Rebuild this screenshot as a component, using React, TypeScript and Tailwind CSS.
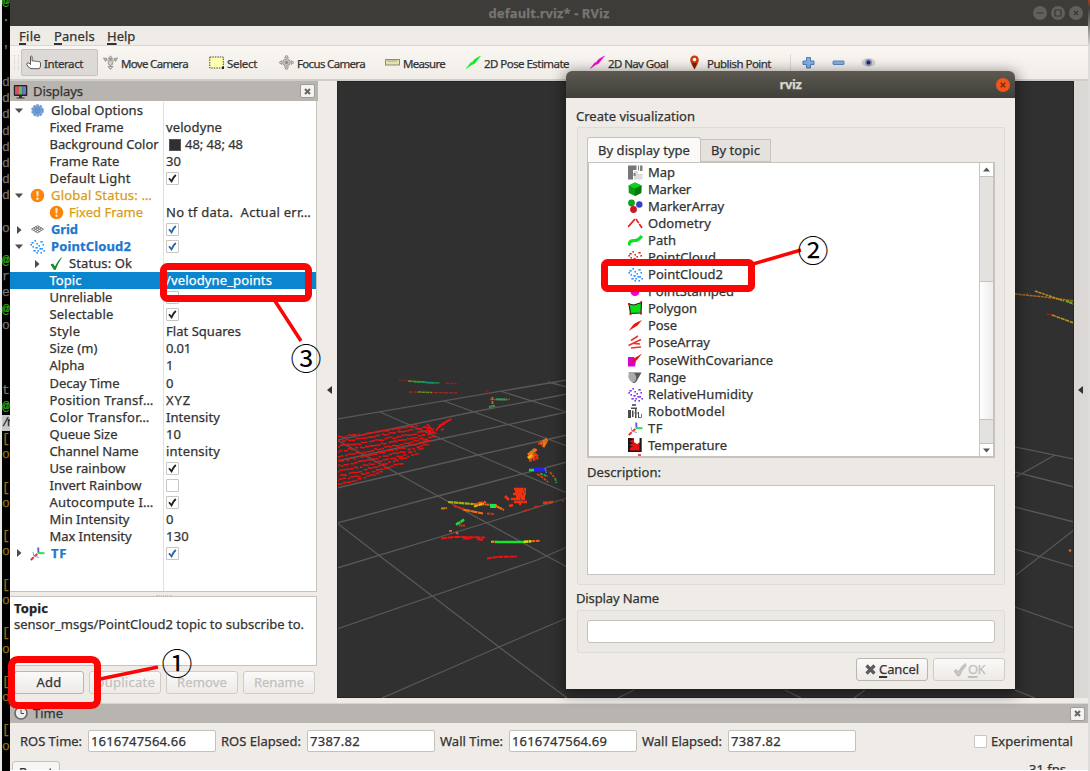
import React, { useLayoutEffect, useRef, useState } from 'react';

/** Text run whose tracking is tuned so that it fills an advance width of `w` pixels. */
function Fit({ w, children, className = '' }: { w: number; children: string; className?: string }) {
  const ref = useRef<HTMLSpanElement>(null);
  const [spacing, setSpacing] = useState(0);
  useLayoutEffect(() => {
    const el = ref.current;
    if (!el) return;
    const natural = el.getBoundingClientRect().width;
    setSpacing((w - natural) / children.length);
  }, [w, children]);
  return (
    <span ref={ref} className={`inline-block shrink-0 whitespace-pre ${className}`} style={{ letterSpacing: spacing }}>
      {children}
    </span>
  );
}

function Mnemonic({ text, className }: { text: string; className: string }) {
  return (
    <span className={className}>
      <span className="underline decoration-[1.5px] underline-offset-[2px]">{text[0]}</span>
      {text.slice(1)}
    </span>
  );
}

const dots = ['2,3', '5,1', '7,4', '11,2', '13,5', '3,7', '6,8', '9,6', '12,9', '4,11', '8,11', '11,13', '14,11', '1,5', '7,13', '10,9'];

function Icon({ name }: { name: string }) {
  const body: Record<string, React.ReactNode> = {
    hand: (
      <path d="M4.500 8V1.500q.8-1 1.600 0V6q.8-.6 1.400.1.900-.6 1.600.2.900-.5 1.600.3 1-.6 1.800 0 1.500-.4 2 1.200v3.500q-.3 2-1.500 2.400H5Q1.500 12 .8 9.500 1 7 2.800 8l1.700 1.500z" fill="#fff" stroke="#555" strokeWidth="1" />
    ),
    move: (
      <g stroke="#96938e" fill="#cfccc6" strokeWidth=".9">
        <path d="M7.500 .8l2 2.700h-4zM7.500 14.500l2.500-3H5zM.5 3l3.500.5-1.500 3zM14.500 3l-3.500.5 1.500 3z" />
        <path d="M2 5h4l1.500-1L9 5h4M7.500 4v7" fill="none" />
        <circle cx="7.500" cy="7.800" r="2.500" />
      </g>
    ),
    select: (
      <g>
        <rect x=".8" y="2" width="13.500" height="11" fill="#ffffb0" stroke="#4d4a28" strokeWidth="1" strokeDasharray="1.500 1" />
        <path d="M13 11.500h2v2.500h-2z" fill="#222" />
      </g>
    ),
    focus: (
      <g stroke="#a09d98" fill="#cbc9c4" strokeWidth="1">
        <path d="M7.500 0l2 3h-4zM7.500 15l2-3h-4zM0 7.500l3-2v4zM15 7.500l-3-2v4z" />
        <circle cx="7.500" cy="7.500" r="3.600" />
        <circle cx="7.500" cy="7.500" r="1.500" fill="#85837e" />
      </g>
    ),
    ruler: (
      <g>
        <rect x=".5" y="4.500" width="14" height="5.500" fill="#e6e2b0" stroke="#8c8a78" />
        <path d="M3 5v2M5 5v2M7 5v2M9 5v2M11 5v2" stroke="#8c8a78" strokeWidth=".7" />
      </g>
    ),
    greenarrow: <path d="M.3 13.500L5 7.500l1.200.2 1-1.700 2-2L14.500 1 10 6.500 8.500 8.500 6 9.500z" fill="#00ee22" stroke="#00ee22" strokeWidth=".5" />,
    pinkarrow: <path d="M.3 13.500L5 7.500l1.200.2 1-1.700 2-2L14.500 1 10 6.500 8.500 8.500 6 9.500z" fill="#f000d0" stroke="#f000d0" strokeWidth=".5" />,
    pin: (
      <g>
        <path d="M5.500 14.500Q1.200 8 1.200 4.800 1.500.8 5.500.6q4 .2 4.300 4.200Q9.800 8 5.500 14.500z" fill="#c73a12" />
        <path d="M5.500 14Q3 9 3.500 8h4q.3 1-2 6z" fill="#712408" />
        <circle cx="5.500" cy="4.600" r="1.800" fill="#fff" />
      </g>
    ),
    plus: <path d="M5.500 2.500h4V6H13v3.500H9.500V13h-4V9.500H2V6h3.500z" fill="#85aede" stroke="#4b7fbd" />,
    minus: <rect x="2" y="6" width="11" height="3.500" rx=".5" fill="#85aede" stroke="#4b7fbd" strokeWidth=".9" />,
    eye: (
      <g>
        <ellipse cx="7.500" cy="7.500" rx="7" ry="4.300" fill="#d2cfce" />
        <circle cx="7.500" cy="7.500" r="3.500" fill="#8a92c4" />
        <circle cx="7.500" cy="7.500" r="1.900" fill="#23285f" />
      </g>
    ),
    monitor: (
      <g>
        <rect x=".8" y="1" width="13.500" height="11" rx="1" fill="#222" />
        <path d="M2 2.300h4v8.200H2z" fill="#d45060" />
        <path d="M6 2.300h3.500v8.200H6z" fill="#50c060" />
        <path d="M9.500 2.300H13v8.200H9.500z" fill="#7070d8" />
        <path d="M6 12h3v1.500h2.500v1h-8v-1H6z" fill="#333" />
      </g>
    ),
    gear: (
      <g>
        <circle cx="7.500" cy="7.500" r="5.300" fill="#78a2da" />
        <circle cx="7.500" cy="7.500" r="5.400" fill="none" stroke="#6c98d4" strokeWidth="1.800" strokeDasharray="2.400 .99" />
        <circle cx="7.500" cy="7.500" r="2.600" fill="none" stroke="#5585c4" />
        <circle cx="7.500" cy="7.500" r="1" fill="#5585c4" />
      </g>
    ),
    warn: (
      <g>
        <circle cx="7.500" cy="7.500" r="6.800" fill="#fb850a" />
        <path d="M6.300 3.200h2.400l-.4 5.300H6.700z" fill="#ffe9c8" />
        <circle cx="7.500" cy="10.800" r="1.200" fill="#ffe9c8" />
      </g>
    ),
    grid: (
      <g fill="none" stroke="#666" strokeWidth=".9">
        <path d="M1.500 7.200l6-3.500 6 3.500-6 3.600z" />
        <path d="M3.500 6l6 3.700M5.500 4.800l6 3.700M11.500 6l-6 3.700M9.500 4.800l-6 3.700" />
      </g>
    ),
    ok: <path d="M1.500 8.500L4 7.500l2 3Q9 4 13.500.8 9 7 6.500 14H5z" fill="#158a2d" />,
    tf: (
      <g fill="none">
        <path d="M.8 14l6.500-6" stroke="#f03030" strokeWidth="2" strokeDasharray="4 1" />
        <path d="M8.500 7.500L8.200 1.500" stroke="#6058f0" strokeWidth="1.900" />
        <path d="M8 7l6.500 .3" stroke="#30e050" strokeWidth="1.900" />
        <path d="M4 10.500L3 6M5 10.500l4 1" stroke="#70b0d8" strokeWidth="1" />
      </g>
    ),
    clock: (
      <g>
        <circle cx="7" cy="7" r="6" fill="#eee" stroke="#666" strokeWidth="1.600" />
        <path d="M7 3.800V7.500h3" fill="none" stroke="#444" />
      </g>
    ),
    map: (
      <g>
        <path d="M0 .5h8.500V5H5v9.500H0z" fill="#777" />
        <path d="M6 6h4v3h4.500v5.500H6z" fill="#dcdcdc" />
        <path d="M10 .5h1v5h-1zM12 .5h2.500V6H12zM5.500 8h2v3h-2z" fill="#808080" />
      </g>
    ),
    cube: (
      <g>
        <path d="M7 .5l6.500 3-.3 7.500L7 14 .8 11 .5 3.500z" fill="#089c12" />
        <path d="M7 .5l6.500 3L7 6.500.5 3.500z" fill="#12cf20" />
        <path d="M7 6.500l6.500-3-.3 7.500L7 14z" fill="#067a0d" />
      </g>
    ),
    balls: (
      <g>
        <circle cx="3.500" cy="4" r="3.400" fill="#0ea31a" />
        <circle cx="11.300" cy="5.500" r="3.200" fill="#3440c8" />
        <circle cx="5.500" cy="10.500" r="3.400" fill="#d0151c" />
      </g>
    ),
    odom: (
      <g stroke="#f01818" strokeWidth="1.600" fill="none">
        <path d="M0 11l7-8" strokeWidth="1.800" />
        <path d="M8 3l6 9" strokeDasharray="5 1" />
      </g>
    ),
    path: <path d="M.8 12.500q.5-5 5-4.800 4.700.2 8-4.700" fill="none" stroke="#10e028" strokeWidth="3.200" />,
    stamp: <circle cx="7" cy="7.500" r="4.500" fill="#ee00d8" />,
    poly: (
      <g>
        <path d="M1 3l5 1L13.500 1.500 13 12l-10.500 .5z" fill="#0ddc18" stroke="#222" strokeWidth="1.200" />
        <path d="M0 2h2v2H0zM12.500 0h1.500v2h-1.500zM1.500 12h2v2h-2zM12 11.500h2v2h-2z" fill="#e01010" />
      </g>
    ),
    pose: <path d="M.5 13L5.500 6.500 7.500 5 14 2 9.500 7.500 7 9z" fill="#ef1212" />,
    poses: (
      <g stroke="#ef3030" strokeWidth="1.600">
        <path d="M3 5.500L10 1M.5 10.500L13 4.500M3 13l10-1M6 8.500l6 .5" />
      </g>
    ),
    cov: (
      <g>
        <path d="M0 4h6l2 4-1 5.500H0z" fill="#d805cf" />
        <path d="M2.500 11L6 5.500 14 .5 9 7z" fill="#ef1212" />
      </g>
    ),
    range: (
      <g>
        <path d="M.5 2.500h13L8.500 11.500Q6.500 14 4 12z" fill="#595959" />
        <ellipse cx="4.200" cy="7.200" rx="3.800" ry="5.200" fill="#aaa" transform="rotate(-18 4 7)" />
      </g>
    ),
    robot: (
      <g>
        <path d="M4 0h4v2H4z" fill="#668" />
        <path d="M3 3.500h6V5H3zM0 6h3v8H0zM4 6.500h1.500V13H4zM7 5h1.500v9H7zM10 8h1v6h-1z" fill="#4c4c4c" />
        <path d="M6 9h4M11 13.500h2.500V10" stroke="#777" fill="none" />
      </g>
    ),
    temp: (
      <g>
        <path d="M0 0h13.500v14H0z" fill="#e81414" />
        <path d="M0 0h2v14H0zM11.500 0h2v14h-2zM2 0l4 1L2 3zM2 4l4 1-4 1.500zM2 8h3l-3 2zM0 12.500h13.500V14H0z" fill="#181818" />
        <path d="M6 0h5.500v4.500L9 6 6 4z" fill="#fff" />
      </g>
    ),
  };
  const cloud: Record<string, string> = { cloudred: '#f02020', cloudblue: '#2c95ff', cloudviolet: '#7d2df0' };
  return (
    <svg width="15" height="15" viewBox="0 0 15 15" className="shrink-0">
      {cloud[name]
        ? dots.map((d, i) => {
            const [x, y] = d.split(',').map(Number);
            return <rect key={i} x={x - 0.6} y={y} width={i % 3 ? 1.6 : 2.3} height="1.600" fill={cloud[name]} />;
          })
        : body[name]}
    </svg>
  );
}

function Check({ on, blue }: { on?: boolean; blue?: boolean }) {
  return (
    <span className="flex size-[13px] shrink-0 items-center justify-center rounded-[1px] border border-[#c9c6c2] bg-white">
      {on && (
        <svg width="9" height="9" viewBox="0 0 9 9">
          <path d="M1 4.200L3.500 7.300Q5 3.500 7.800 1" fill="none" stroke={blue ? '#2568ae' : '#222'} strokeWidth="1.800" />
        </svg>
      )}
    </span>
  );
}

function CloseBox() {
  return (
    <span className="flex h-[14px] w-[15px] items-center justify-center rounded-[2px] border border-[#a19d98] bg-[#f5f3f1]">
      <svg width="7" height="7" viewBox="0 0 7 7">
        <path d="M1 1l5 5M6 1L1 6" stroke="#666" strokeWidth="2" />
      </svg>
    </span>
  );
}

type RowT = {
  t: string; w: number; v?: string; vw?: number; icon?: string; arrow?: 'down' | 'right';
  deep?: boolean; tone?: 'warn' | 'blue'; check?: boolean; blue?: boolean; swatch?: boolean; sel?: boolean;
};
const rows: RowT[] = [
  { t: 'Global Options', w: 92, icon: 'gear', arrow: 'down' },
  { t: 'Fixed Frame', w: 74, v: 'velodyne', vw: 56 },
  { t: 'Background Color', w: 109, v: '48; 48; 48', vw: 58, swatch: true },
  { t: 'Frame Rate', w: 70, v: '30', vw: 15 },
  { t: 'Default Light', w: 81, check: true },
  { t: 'Global Status: …', w: 101, icon: 'warn', arrow: 'down', tone: 'warn' },
  { t: 'Fixed Frame', w: 74, icon: 'warn', deep: true, tone: 'warn', v: 'No tf data.  Actual err…', vw: 145 },
  { t: 'Grid', w: 27, icon: 'grid', arrow: 'right', tone: 'blue', check: true, blue: true },
  { t: 'PointCloud2', w: 80, icon: 'cloudblue', arrow: 'down', tone: 'blue', check: true, blue: true },
  { t: 'Status: Ok', w: 63, icon: 'ok', deep: true, arrow: 'right' },
  { t: 'Topic', w: 32, v: '/velodyne_points', vw: 106, sel: true },
  { t: 'Unreliable', w: 63, check: false },
  { t: 'Selectable', w: 64, check: true },
  { t: 'Style', w: 31, v: 'Flat Squares', vw: 75 },
  { t: 'Size (m)', w: 48, v: '0.01', vw: 25 },
  { t: 'Alpha', w: 35, v: '1', vw: 8 },
  { t: 'Decay Time', w: 70, v: '0', vw: 8 },
  { t: 'Position Transf…', w: 104, v: 'XYZ', vw: 25 },
  { t: 'Color Transfor…', w: 100, v: 'Intensity', vw: 54 },
  { t: 'Queue Size', w: 68, v: '10', vw: 15 },
  { t: 'Channel Name', w: 89, v: 'intensity', vw: 54 },
  { t: 'Use rainbow', w: 76, check: true },
  { t: 'Invert Rainbow', w: 92, check: false },
  { t: 'Autocompute I…', w: 104, check: true },
  { t: 'Min Intensity', w: 80, v: '0', vw: 8 },
  { t: 'Max Intensity', w: 82, v: '130', vw: 23 },
  { t: 'TF', w: 16, icon: 'tf', arrow: 'right', tone: 'blue', check: true, blue: true },
];

function Arrow({ dir }: { dir?: 'down' | 'right' }) {
  return (
    <svg width="8" height="8" viewBox="0 0 8 8" className="shrink-0">
      {dir && <path d={dir === 'down' ? 'M0 1.500h8L4 6z' : 'M2 0v8l4.500-4z'} fill="#4c4c4c" />}
    </svg>
  );
}

function TreeRow({ r }: { r: RowT }) {
  const color = r.sel ? 'text-white' : r.tone === 'warn' ? 'text-[#d99d14]' : r.tone === 'blue' ? 'font-bold text-[#1b78d0]' : 'text-[#333]';
  return (
    <div className={`flex h-[17.04px] shrink-0 items-center ${r.sel ? 'bg-[#0a86cf]' : ''}`}>
      <div className={`flex h-full w-[154px] shrink-0 items-center border-r ${r.sel ? 'border-[#0a86cf]' : 'border-[#e0e0e0]'} ${r.icon ? (r.deep ? 'pl-[23px]' : 'pl-[5px]') : 'pl-[39.5px]'}`}>
        {r.icon && (
          <>
            <Arrow dir={r.arrow} />
            <span className={`flex ${r.deep ? 'pr-[5px] pl-[8px]' : 'pr-[6px] pl-[7px]'}`}><Icon name={r.icon} /></span>
          </>
        )}
        <Fit w={r.w} className={color}>{r.t}</Fit>
      </div>
      <div className="flex items-center pl-[2px]">
        {r.swatch && <span className="mr-[4px] ml-[3px] size-[12px] border border-[#555] bg-[#303030]" />}
        {r.check !== undefined && <Check on={r.check} blue={r.blue} />}
        {r.v && <Fit w={r.vw ?? 10} className={r.sel ? 'text-white' : 'text-[#333]'}>{r.v}</Fit>}
      </div>
    </div>
  );
}

const tools: { t: string; tw: number; icon: string; box: string }[] = [
  { t: 'Interact', tw: 39, icon: 'hand', box: 'w-[77px] h-[27px] rounded-[2px] border border-[#c7c2be] bg-[#ddd9d6] pl-[4px]' },
  { t: 'Move Camera', tw: 67, icon: 'move', box: 'w-[106px] pl-[5px]' },
  { t: 'Select', tw: 30, icon: 'select', box: 'w-[70px] pl-[5px]' },
  { t: 'Focus Camera', tw: 68, icon: 'focus', box: 'w-[106px] pl-[5px]' },
  { t: 'Measure', tw: 42, icon: 'ruler', box: 'w-[81px] pl-[5px]' },
  { t: '2D Pose Estimate', tw: 85, icon: 'greenarrow', box: 'w-[124px] pl-[5px]' },
  { t: '2D Nav Goal', tw: 60, icon: 'pinkarrow', box: 'w-[101px] pl-[5px]' },
  { t: 'Publish Point', tw: 64, icon: 'pin', box: 'w-[103px] pl-[3px]' },
];

const kinds: [string, number, string][] = [
  ['Map', 27, 'map'], ['Marker', 43, 'cube'], ['MarkerArray', 76, 'balls'], ['Odometry', 63, 'odom'],
  ['Path', 28, 'path'], ['PointCloud', 68, 'cloudred'], ['PointCloud2', 75, 'cloudblue'], ['PointStamped', 86, 'stamp'],
  ['Polygon', 49, 'poly'], ['Pose', 29, 'pose'], ['PoseArray', 62, 'poses'], ['PoseWithCovariance', 125, 'cov'],
  ['Range', 38, 'range'], ['RelativeHumidity', 105, 'cloudviolet'], ['RobotModel', 77, 'robot'], ['TF', 15, 'tf'], ['Temperature', 79, 'temp'],
];

const gridLines =
  'M337 419L567 380M337 440L473 412L567 394M337 461L440 439L567 412M337 488L478 455L567 435M337 523L438 496L567 462M337 568L486 523L567 498M337 629L537 560L567 547M382 698L499 647L567 618' +
  'M548 382L567 387M500 391L567 412M444 401L548 439L567 446M380 412L478 455L567 493M337 440L438 496L545 555L567 567M337 523L385 560L499 647L567 698' +
  'M1015 447L1074 459M1015 472L1074 487M1015 507L1074 522M1015 549L1074 567M1015 607L1074 628M1015 690L1035 698M1016 477L1055 455M1016 575L1074 530M618 698L634 690M785 690L801 698M854 698L865 690';

/** Scan rings of the wall on the left: start y, length, rise. */
const rings: [number, number, number][] = [
  [437, 80, 12], [441, 88, 14], [446, 97, 17], [451, 95, 18], [456, 96, 20],
  [461, 92, 21], [466, 90, 22], [471, 86, 23], [476, 79, 23], [480, 66, 18], [484, 44, 12],
];
function noise(n: number) {
  const v = Math.sin(n * 127.1 + 11.7) * 43758.5453;
  return v - Math.floor(v);
}
function ringPath(y: number, len: number, rise: number, seed: number) {
  let d = '';
  let x = 0;
  let i = seed * 97;
  while (x < len) {
    const step = 1.5 + noise(i) * 3;
    const jitter = (noise(i + 1) - 0.5) * 1.8;
    const t = x / len;
    d += `M${(337 + x).toFixed(1)} ${(y - rise * (0.7 * t + 0.3 * t * t) + jitter).toFixed(1)}h${(step * 0.95).toFixed(1)}`;
    x += step + (noise(i + 2) > 0.85 ? 1.6 : 0);
    i += 3;
  }
  return d;
}

/** Coloured lidar returns: path, colour, width, dash pattern. */
const returns: [string, string, number, string][] = [
  ['M399 380l12 1', '#8c2a20', 1.2, '2 1'], ['M408 381l18 1', '#7a8a20', 1.4, '4 .5'], ['M414 382l26 1', '#1a9040', 1.5, '6 .5'], ['M426 382.500l8 .5', '#189090', 1.3, '3 0'], ['M446 383l12 1', '#8c2a20', 1.3, '3 1'],
  ['M409 392l48 1', '#9a2a20', 1.3, '4 1'], ['M418 392l14 .5', '#609020', 1.5, '3 1'],
  ['M486 390l3 4', '#8c2a20', 1.3, '2 1'], ['M490 399.500l20 0', '#b03a20', 1.5, '3 .5'], ['M496 399.300l11 .3', '#20a060', 2, '9 .5'], ['M492.500 397v9', '#908020', 1.8, '3 1'], ['M489 407l6-1', '#409050', 2, '3 .5'],
  ['M425 426l4 5 8 3M427 424l7 8M436 431l4-6 11-6M438 428l13-9M441 430l3-1M448 421l4-2M429 425v8', '#ef1212', 1.700, '4 .8'],
  ['M528 455l7-6M528 458l5-6 4-3M529 459l7-5M540 444l7-5M543 447l4-7', '#ef7410', 2.800, '6 .4'],
  ['M529 461l8-2M535 453l3 6M533 459l5-4M538 444l5-2', '#e83412', 2, '3 .8'], ['M528 458l4-3', '#eec010', 2, '3 0'],
  ['M529 470l6 0', '#18d850', 2.5, '5 0'], ['M534 469.500h12', '#2a20f0', 4, '12 0'], ['M545 468l1.500 5', '#3080c0', 1.5, '3 .5'],
  ['M537 474l5 3 6 5M550 472l4 5', '#d84018', 1.8, '3 1'], ['M540 473.500l8 3M555 478l1.500 5', '#30a840', 1.7, '3 1'],
  ['M514 489h12M515 491.500h11M513 494h13M516 496.500h9M511 499h14M514 502h13M519 504h2M505 496l4 4M509 506l4-1', '#f0320f', 2.7, '9 .5'],
  ['M448 502l25 2', '#a8b010', 2.2, '5 .6'], ['M473 504l24 1M478 503l8-1', '#f05812', 2, '5 .8'], ['M441 508.500l6-.5', '#c88010', 2, '4 .5'], ['M474 506.500l10-3', '#d8c010', 2, '4 .6'], ['M490 506h6', '#18e850', 4, '6 0'],
  ['M463 509.500l20 4M496 506l8 4', '#f06c10', 2.2, '7 .6'], ['M487 513.500l7 .5M454 506l10 3', '#e02a12', 2, '3 .8'],
  ['M456 524.500l4-2 4-3', '#20d840', 2.6, '5 .5'], ['M449 531l4 0M456 532l2 2', '#e06010', 2, '3 1'], ['M459 525.500h6', '#e02a12', 1.8, '3 .5'],
  ['M441 538.500l13-1.500 31 .5M463 538.500h8M477 539l6 1', '#ee1212', 2, '6 .7'],
  ['M491 541.800h6', '#e8a010', 2, '3 .5'], ['M495 542h30', '#10e828', 2.4, '30 0'], ['M524 541.800l7-.5', '#d8e010', 2.4, '4 .5'], ['M531 541.300l9-.5', '#e86410', 2, '4 .7'],
  ['M487 558.500l10-1.500 20-.5', '#ee1212', 2, '5 .7'], ['M524 511l5-1M534 507l5-1M562 501h2', '#c82a18', 1.7, '3 1'], ['M543 503l10-1', '#e83410', 2.4, '5 .5'],
  ['M1015 294L1045 297L1074 301', '#b06a18', 1.5, '3 .7'], ['M1023 295l6-2', '#b04018', 1, '1 1'], ['M1035 291L1064 301', '#b89018', 1.5, '3 .7'], ['M1066 301L1074 304', '#60b820', 2, '3 .5'],
  ['M1047 314l6 1', '#a82020', 1.4, '2 .5'], ['M1052 315l22 8', '#b89a18', 1.5, '4 .7'], ['M1069 551l2-1', '#ee7010', 2.2, '3 0'],
];

function Viewport() {
  return (
    <div className="w-[737px] shrink-0 border border-[#252525] bg-[#303030]">
      <svg width="735" height="616" viewBox="338 82 735 616" className="block">
        <path d={gridLines} fill="none" stroke="#595959" strokeWidth="1.300" />
        {rings.map(([y, len, rise], i) => (
          <path key={i} d={ringPath(y, len, rise, i + 1)} fill="none" stroke="#ea1010" strokeWidth="1.600" />
        ))}
        {returns.map(([d, c, w, dash], i) => (
          <path key={i} d={d} fill="none" stroke={c} strokeWidth={w} strokeDasharray={dash} />
        ))}
      </svg>
    </div>
  );
}

const term = ['@', '.', '', "'", '', 'd', 'd', 'd', 'd', 'd', 'd', 'd', 'd', '', 'o', '', '@', 'r', 'e', '@', 'o', '', '', '', 't', '@', '/r', '[', 'o', '', '[', 'o', '', '[', 'o', '', '[', 'o', '', '[', 'o', '', '[', 'o', '', '[', 'o', ''];

function Terminal() {
  return (
    <div className="flex w-[10px] shrink-0 flex-col overflow-hidden border-l-2 border-[#e8e8e8] bg-black font-['Liberation_Mono'] text-[13px]">
      <div className="-mt-[6px]" />
      {term.map((c, i) => (
        <div
          key={i}
          className={`h-[16.2px] shrink-0 leading-[16px] ${c === '@' ? 'font-bold text-[#31a512]' : c === '/r' ? 'bg-[#c8c8c8] text-[12px] tracking-[-3px] text-[#222]' : i > 26 ? 'text-[#8f7410]' : 'text-[#747474]'}`}
        >
          {c}
        </div>
      ))}
    </div>
  );
}

function Field({ v, w }: { v: string; w: number }) {
  return (
    <div className="flex h-[22px] w-[128px] shrink-0 items-center rounded-[2px] border border-[#c4c0bb] bg-white pl-[2px]">
      <Fit w={w}>{v}</Fit>
    </div>
  );
}

const btn = 'flex h-[23px] shrink-0 items-center justify-center rounded-[3px] border bg-linear-to-b from-[#fbfaf9] to-[#edeae7]';

function Dialog() {
  return (
    <div className="absolute top-[71px] left-[566px] flex h-[618px] w-[449px] flex-col overflow-hidden rounded-t-[6px] bg-[#efebe7] shadow-[0_3px_14px_2px_rgba(0,0,0,0.45)]">
      <div className="relative flex h-[27px] shrink-0 items-center justify-center bg-linear-to-b from-[#5c5a51] to-[#403f3a] font-bold text-[#dcd7cb]">
        <Fit w={22}>rviz</Fit>
        <svg width="14" height="14" viewBox="0 0 14 14" className="absolute top-[7px] right-[5px]">
          <circle cx="7" cy="7" r="7" fill="#f2541b" />
          <path d="M4.700 4.700l4.600 4.600M9.300 4.700l-4.600 4.600" stroke="#76300f" strokeWidth="1.500" />
        </svg>
      </div>
      <div className="flex flex-col px-[10px]">
        <div className="flex h-[28px] items-center pt-[8px] leading-[18px]"><Fit w={119}>Create visualization</Fit></div>
        <div className="mt-px ml-px h-[458px] w-[428px] rounded-[2px] border border-[#dfdbd6] bg-[#ece8e4] px-[9px] pt-[9px]">
          <div className="flex h-[25px] items-end">
            <div className="flex h-[25px] w-[114px] items-center justify-center rounded-t-[3px] border border-b-0 border-[#c6c2bd] bg-[#fbfaf9]"><Fit w={92}>By display type</Fit></div>
            <div className="flex h-[23px] w-[70px] items-center justify-center border border-l-0 border-[#c6c2bd] bg-[#e5e1dd]"><Fit w={49}>By topic</Fit></div>
          </div>
          <div className="flex h-[296px] w-[408px] overflow-hidden border-2 border-t border-[#c6c2bd] bg-white">
            <div className="flex flex-1 flex-col pt-px pl-[39px]">
              {kinds.map(([t, w, icon]) => (
                <div key={t} className="flex h-[17.06px] shrink-0 items-center gap-[5px]">
                  <Icon name={icon} />
                  <Fit w={w}>{t}</Fit>
                </div>
              ))}
              <div className="h-[2px] w-[3px] translate-x-[10px] bg-[#f05050]" />
            </div>
            <div className="flex w-[14px] flex-col border-l border-[#c9c6c2]">
              <div className="flex h-[13px] items-center justify-center">
                <svg width="7" height="5"><path d="M0 4.500h7L3.500.5z" fill="#555" /></svg>
              </div>
              <div className="h-[106px] border-y border-[#c5c2be] bg-[#e3e2df]" />
              <div className="flex-1 bg-linear-to-r from-white to-[#eeedea]" />
              <div className="h-[25px] border-y border-[#c5c2be] bg-[#e3e2df]" />
              <div className="flex h-[12px] items-center justify-center">
                <svg width="7" height="5"><path d="M0 .5h7L3.500 4.500z" fill="#555" /></svg>
              </div>
            </div>
          </div>
          <div className="flex h-[27px] items-center pt-px"><Fit w={74}>Description:</Fit></div>
          <div className="h-[90px] w-[408px] border border-[#c6c2bd] bg-white" />
        </div>
        <div className="flex h-[25px] items-center pt-[2px]"><Fit w={83}>Display Name</Fit></div>
        <div className="ml-px h-[43px] w-[428px] rounded-[2px] border border-[#dfdbd6] bg-[#ece8e4] px-[9px] pt-[9px]">
          <div className="h-[23px] w-[408px] rounded-[3px] border border-[#c4c0bb] bg-white" />
        </div>
        <div className="flex justify-end gap-[5px] pt-[5px]">
          <div className={`${btn} w-[72px] gap-[3px] border-[#b9b5b0]`}>
            <svg width="11" height="11" viewBox="0 0 11 11"><path d="M1.500 1.500l8 8M9.500 1.500l-8 8" stroke="#5c5c5c" strokeWidth="3.200" /></svg>
            <Mnemonic text="Cancel" className="tracking-[-0.1px]" />
          </div>
          <div className={`${btn} w-[72px] gap-px border-[#cfcbc6] text-[#c2bfbc]`}>
            <svg width="14" height="14" viewBox="0 0 14 14"><path d="M1 8l2.500-1.500 2 2.500Q8 3 12.500.5L13 3Q9 7 6.500 13h-2z" fill="#c9c6c3" stroke="#adaaa7" strokeWidth=".6" /></svg>
            <Mnemonic text="OK" className="tracking-[-0.5px]" />
          </div>
        </div>
      </div>
    </div>
  );
}

const mark = "absolute flex size-[40px] items-center justify-center font-['Noto_Sans_CJK_JP',sans-serif] text-[31px] text-black [-webkit-text-stroke:0px]";

export default function App() {
  return (
    <div className="relative flex h-[771px] w-[1090px] overflow-hidden bg-[#efebe7] font-['Noto_Sans','Open_Sans',sans-serif] text-[13px] leading-[17px] text-[#333] [-webkit-text-stroke:0.25px]">
      <Terminal />
      <div className="flex w-[1078px] shrink-0 flex-col">
        <div className="flex h-[26px] shrink-0 items-center bg-[#3d3c38]">
          <div className="flex w-[1021px] justify-center pl-[57px] font-bold text-[#777571]"><Fit w={121}>default.rviz* - RViz</Fit></div>
          <svg width="54" height="16" viewBox="0 0 54 16">
            <g fill="#62605a">
              <circle cx="9" cy="8" r="7" />
              <circle cx="27" cy="8" r="7" />
              <circle cx="45" cy="8" r="7" />
            </g>
            <path d="M5.500 8h7M24 5h6v6h-6zM43 6l4 4M47 6l-4 4" fill="none" stroke="#383733" strokeWidth="1.200" />
          </svg>
        </div>
        <div className="flex h-[20px] shrink-0 items-center border-b border-[#dad6d2] pt-px pl-[9px]">
          <div className="flex w-[35px]"><Mnemonic text="File" className="tracking-[0.3px]" /></div>
          <div className="flex w-[53px]"><Mnemonic text="Panels" className="tracking-[0.1px]" /></div>
          <Mnemonic text="Help" className="" />
        </div>
        <div className="flex h-[35px] shrink-0 items-center border-b-2 border-[#d0ccc8] bg-linear-to-b from-[#faf6f2] to-[#f0ece8] text-[11.5px]">
          <div className="mr-[2px] ml-[4px] h-[15px] w-[5px] border-x border-dotted border-[#cfcbc7]" />
          {tools.map((t) => (
            <div key={t.t} className={`flex shrink-0 items-center ${t.box}`}>
              <Icon name={t.icon} />
              <span className="w-[3px]" />
              <Fit w={t.tw} className="pt-px">{t.t}</Fit>
            </div>
          ))}
          <div className="ml-px h-[17px] border-l border-[#dcd8d4]" />
          <div className="flex gap-[15px] pl-[10px]">
            <Icon name="plus" /><Icon name="minus" /><Icon name="eye" />
          </div>
        </div>
        <div className="flex h-[617px] shrink-0">
          <div className="flex w-[308px] shrink-0 flex-col">
            <div className="flex h-[20px] items-center bg-[#b8b4b0] pr-[3px] pl-[3px]">
              <Icon name="monitor" />
              <span className="w-[5px]" />
              <Fit w={50}>Displays</Fit>
              <span className="flex-1" />
              <CloseBox />
            </div>
            <div className="flex h-[491px] w-[307px] flex-col overflow-hidden border-r border-b border-[#c6c2be] bg-white pt-px">
              {rows.map((r, i) => <TreeRow key={i} r={r} />)}
              <div className="w-[154px] flex-1 border-r border-[#e0e0e0]" />
            </div>
            <div className="h-[4px] self-center border-b border-dotted border-[#c5c1bd] px-[8px]" />
            <div className="flex h-[70px] w-[307px] flex-col items-start border border-l-0 border-[#c6c2be] bg-white pt-[3px] pl-[4px] leading-[16px]">
              <Fit w={34} className="font-bold text-[#222]">Topic</Fit>
              <Fit w={290}>sensor_msgs/PointCloud2 topic to subscribe to.</Fit>
            </div>
            <div className="flex gap-[5px] pt-[5px] pl-[4px] text-[#c3c0bd]">
              <div className={`${btn} w-[70px] border-[#b9b5b0] text-[#333]`}><Fit w={25}>Add</Fit></div>
              <div className={`${btn} w-[72px] border-[#cfcbc6]`}><Fit w={60}>Duplicate</Fit></div>
              <div className={`${btn} w-[72px] border-[#cfcbc6]`}><Fit w={50}>Remove</Fit></div>
              <div className={`${btn} w-[72px] border-[#cfcbc6]`}><Fit w={50}>Rename</Fit></div>
            </div>
          </div>
          <div className="flex w-[19px] shrink-0 items-center justify-end pr-[5px]">
            <svg width="5" height="8"><path d="M5 0v8L0 4z" fill="#333" /></svg>
          </div>
          <Viewport />
          <div className="flex flex-1 items-center justify-center bg-[#dcd8d5] pr-[2px]">
            <svg width="5" height="8"><path d="M5 0v8L0 4z" fill="#333" /></svg>
          </div>
        </div>
        <div className="mt-[5px] flex h-[20px] shrink-0 items-center border-t border-[#d8d4d0] bg-[#b8b4b0] pr-[3px] pl-[4px]">
          <Icon name="clock" />
          <span className="w-[4px]" />
          <Fit w={30}>Time</Fit>
          <span className="flex-1" />
          <CloseBox />
        </div>
        <div className="flex h-[36px] shrink-0 items-center pl-[10px]">
          <div className="flex w-[68px]"><Fit w={62}>ROS Time:</Fit></div>
          <Field v="1616747564.66" w={95} />
          <div className="flex w-[91px] pl-[5px]"><Fit w={80}>ROS Elapsed:</Fit></div>
          <Field v="7387.82" w={50} />
          <div className="flex w-[74px] pl-[5px]"><Fit w={63}>Wall Time:</Fit></div>
          <Field v="1616747564.69" w={95} />
          <div className="flex w-[91px] pl-[5px]"><Fit w={80}>Wall Elapsed:</Fit></div>
          <Field v="7387.82" w={50} />
          <span className="w-[118px]" />
          <Check />
          <span className="w-[4px]" />
          <Fit w={82}>Experimental</Fit>
        </div>
        <div className="flex h-[12px] items-start justify-between overflow-hidden border-b border-white pr-[22px] pl-[2px]">
          <div className="mt-[2px] h-[23px] w-[48px] rounded-[3px] border border-[#c4c0bb] bg-[#f8f6f5] pt-[2px] pl-[6px]"><Fit w={34}>Reset</Fit></div>
          <div className="pt-[2px]"><Fit w={37}>31 fps</Fit></div>
        </div>
      </div>
      <div className="w-[2px] shrink-0 bg-linear-to-b from-[#a33c18] from-0% via-[#3d3c38] via-[1%] to-[#dedddb] to-[6%]" />
      <Dialog />
      <svg width="1090" height="771" viewBox="0 0 1090 771" className="pointer-events-none absolute inset-0">
        <g fill="none" stroke="#fb0505">
          <rect x="11.500" y="659.500" width="86" height="46" rx="6" strokeWidth="7" />
          <rect x="163.500" y="266.500" width="145" height="32" rx="4" strokeWidth="7" />
          <rect x="604.500" y="262.500" width="147" height="26" rx="3" strokeWidth="7" />
          <path d="M100 679L158 667M275 301L301 341M753 264L801 250" strokeWidth="3.500" />
        </g>
      </svg>
      <span className={`top-[641px] left-[157px] ${mark}`}>①</span>
      <span className={`top-[228px] left-[793px] ${mark}`}>②</span>
      <span className={`top-[336px] left-[286px] ${mark}`}>③</span>
    </div>
  );
}
